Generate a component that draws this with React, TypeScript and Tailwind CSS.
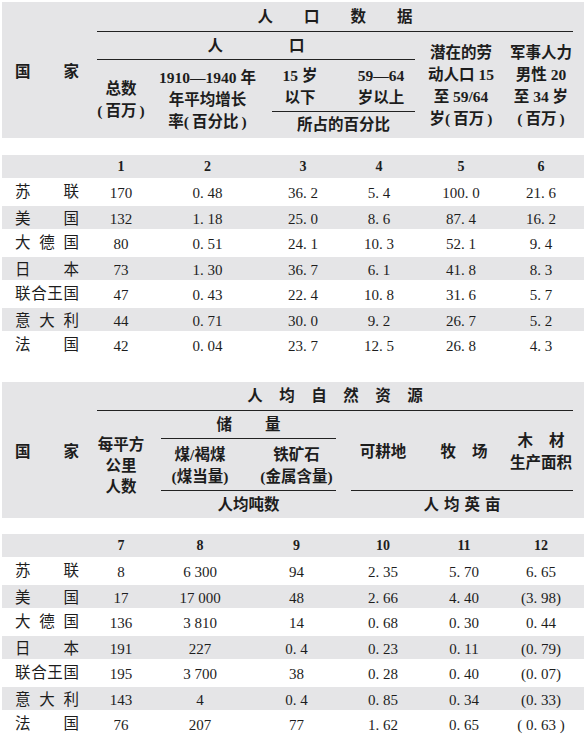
import React from 'react';

type Row = { name: string[]; values: string[] };

const GRID1 = 'grid grid-cols-[95px_48px_125px_66px_86px_78px_82px]';
const GRID2 = 'grid grid-cols-[95px_48px_110px_83px_90px_72px_82px]';

// 括号两侧留一点细空，接近原排版
const paren = (s: string) => `(\u2009${s}\u2009)`;

const POPULATION: Row[] = [
    { name: ['苏', '联'], values: ['170', '0. 48', '36. 2', '5. 4', '100. 0', '21. 6'] },
    { name: ['美', '国'], values: ['132', '1. 18', '25. 0', '8. 6', '87. 4', '16. 2'] },
    { name: ['大', '德', '国'], values: ['80', '0. 51', '24. 1', '10. 3', '52. 1', '9. 4'] },
    { name: ['日', '本'], values: ['73', '1. 30', '36. 7', '6. 1', '41. 8', '8. 3'] },
    { name: ['联', '合', '王', '国'], values: ['47', '0. 43', '22. 4', '10. 8', '31. 6', '5. 7'] },
    { name: ['意', '大', '利'], values: ['44', '0. 71', '30. 0', '9. 2', '26. 7', '5. 2'] },
    { name: ['法', '国'], values: ['42', '0. 04', '23. 7', '12. 5', '26. 8', '4. 3'] },
];

const RESOURCES: Row[] = [
    { name: ['苏', '联'], values: ['8', '6 300', '94', '2. 35', '5. 70', '6. 65'] },
    { name: ['美', '国'], values: ['17', '17 000', '48', '2. 66', '4. 40', '(3. 98)'] },
    { name: ['大', '德', '国'], values: ['136', '3 810', '14', '0. 68', '0. 30', '0. 44'] },
    { name: ['日', '本'], values: ['191', '227', '0. 4', '0. 23', '0. 11', '(0. 79)'] },
    { name: ['联', '合', '王', '国'], values: ['195', '3 700', '38', '0. 28', '0. 40', '(0. 07)'] },
    { name: ['意', '大', '利'], values: ['143', '4', '0. 4', '0. 85', '0. 34', '(0. 33)'] },
    { name: ['法', '国'], values: ['76', '207', '77', '1. 62', '0. 65', '( 0. 63 )'] },
];

const Country = ({ chars }: { chars: string[] }) => (
    <div className="ml-[13px] flex w-[64px] justify-between">
        {chars.map((c, i) => (
            <span key={i}>{c}</span>
        ))}
    </div>
);

const DataRows = ({ rows, grid }: { rows: Row[]; grid: string }) => (
    <div className="flex flex-col">
        {rows.map((r, i) => (
            <div
                key={i}
                className={`${grid} items-center ${i % 2 ? 'h-[23px] bg-[#e5e5e7]' : 'h-[28px]'}`}
            >
                <div className="text-[15.5px]">
                    <Country chars={r.name} />
                </div>
                {r.values.map((v, j) => (
                    <div key={j} className="pt-[2px] text-center text-[15px] whitespace-pre">
                        {v}
                    </div>
                ))}
            </div>
        ))}
    </div>
);

const NumberRow = ({ nums, grid }: { nums: string[]; grid: string }) => (
    <div className={`${grid} h-[23px] items-center bg-[#e5e5e7] text-[14px] font-bold`}>
        <div />
        {nums.map((n) => (
            <div key={n} className="text-center">{n}</div>
        ))}
    </div>
);

export default function App() {
    return (
        <div className="h-[738px] w-[586px] overflow-hidden bg-white px-[2px] pt-[2px] text-[#1d1d1d] font-['Liberation_Serif','Noto_Sans_CJK_SC',serif]">
            {/* 人口数据 */}
            <div className={`${GRID1} grid-rows-[30px_28px_51px_27px] bg-[#e5e5e7] text-[15.5px] font-bold leading-[22px] whitespace-nowrap`}>
                <div className="col-start-1 row-span-4 row-start-1 flex items-center pt-[4px]">
                    <Country chars={['国', '家']} />
                </div>
                <div className="col-span-6 col-start-2 row-start-1 mr-[9px] flex items-center justify-center gap-[31px] border-b border-[#222]">
                    <span>人</span><span>口</span><span>数</span><span>据</span>
                </div>
                <div className="col-span-4 col-start-2 row-start-2 mr-[7px] flex items-center justify-center gap-[66px] border-b border-[#222]">
                    <span>人</span><span>口</span>
                </div>
                <div className="col-start-6 row-span-3 row-start-2 flex flex-col items-center justify-center pt-[2px]">
                    <span>潜在的劳</span>
                    <span>动人口 15</span>
                    <span>至 59/64</span>
                    <span>岁{paren('百万')}</span>
                </div>
                <div className="col-start-7 row-span-3 row-start-2 flex flex-col items-center justify-center pt-[2px]">
                    <span>军事人力</span>
                    <span>男性 20</span>
                    <span>至 34 岁</span>
                    <span>{paren('百万')}</span>
                </div>
                <div className="col-start-2 row-span-2 row-start-3 flex flex-col items-center justify-center pt-[2px]">
                    <span>总数</span>
                    <span>{paren('百万')}</span>
                </div>
                <div className="col-start-3 row-span-2 row-start-3 flex flex-col items-center justify-center pt-[2px]">
                    <span>1910—1940 年</span>
                    <span>年平均增长</span>
                    <span>率{paren('百分比')}</span>
                </div>
                <div className="col-start-4 row-start-3 flex flex-col items-center justify-center pr-[6px] pt-[2px]">
                    <span>15 岁</span>
                    <span>以下</span>
                </div>
                <div className="col-start-5 row-start-3 flex flex-col items-center justify-center pl-[4px] pt-[2px]">
                    <span>59—64</span>
                    <span>岁以上</span>
                </div>
                <div className="col-span-2 col-start-4 row-start-4 ml-[2px] mr-[7px] flex items-center justify-center border-t border-[#222]">
                    所占的百分比
                </div>
            </div>
            <div className="mt-[17px]">
                <NumberRow grid={GRID1} nums={['1', '2', '3', '4', '5', '6']} />
            </div>
            <DataRows rows={POPULATION} grid={GRID1} />

            {/* 人均自然资源 */}
            <div className={`${GRID2} mt-[23px] grid-rows-[29px_28px_51px_28px] bg-[#e5e5e7] text-[15.5px] font-bold leading-[22px] whitespace-nowrap`}>
                <div className="col-start-1 row-span-4 row-start-1 flex items-center pt-[4px]">
                    <Country chars={['国', '家']} />
                </div>
                <div className="col-span-6 col-start-2 row-start-1 mr-[9px] flex items-center justify-center gap-[16.5px] border-b border-[#222]">
                    <span>人</span><span>均</span><span>自</span><span>然</span><span>资</span><span>源</span>
                </div>
                <div className="col-start-2 row-span-3 row-start-2 flex flex-col items-center justify-center pt-[2px] leading-[21px]">
                    <span>每平方</span>
                    <span>公里</span>
                    <span>人数</span>
                </div>
                <div className="col-span-2 col-start-3 row-start-2 ml-[16px] mr-[2px] flex items-center justify-center gap-[33px] border-b border-[#222]">
                    <span>储</span><span>量</span>
                </div>
                <div className="col-start-3 row-start-3 flex flex-col items-center justify-center pt-[2px]">
                    <span>煤/褐煤</span>
                    <span>(煤当量)</span>
                </div>
                <div className="col-start-4 row-start-3 flex flex-col items-center justify-center pt-[2px]">
                    <span>铁矿石</span>
                    <span>(金属含量)</span>
                </div>
                <div className="col-start-5 row-span-2 row-start-2 flex items-center justify-center pt-[2px]">
                    可耕地
                </div>
                <div className="col-start-6 row-span-2 row-start-2 flex items-center justify-center gap-[16px] pt-[2px]">
                    <span>牧</span><span>场</span>
                </div>
                <div className="col-start-7 row-span-2 row-start-2 flex flex-col items-center justify-center pt-[2px]">
                    <span className="flex gap-[16px]"><span>木</span><span>材</span></span>
                    <span>生产面积</span>
                </div>
                <div className="col-span-2 col-start-3 row-start-4 ml-[16px] mr-[2px] flex items-center justify-center border-t border-[#222]">
                    人均吨数
                </div>
                <div className="col-span-3 col-start-5 row-start-4 ml-[13px] mr-[9px] flex items-center justify-center gap-[5px] border-t border-[#222]">
                    <span>人</span><span>均</span><span>英</span><span>亩</span>
                </div>
            </div>
            <div className="mt-[16px]">
                <NumberRow grid={GRID2} nums={['7', '8', '9', '10', '11', '12']} />
            </div>
            <DataRows rows={RESOURCES} grid={GRID2} />
        </div>
    );
}
